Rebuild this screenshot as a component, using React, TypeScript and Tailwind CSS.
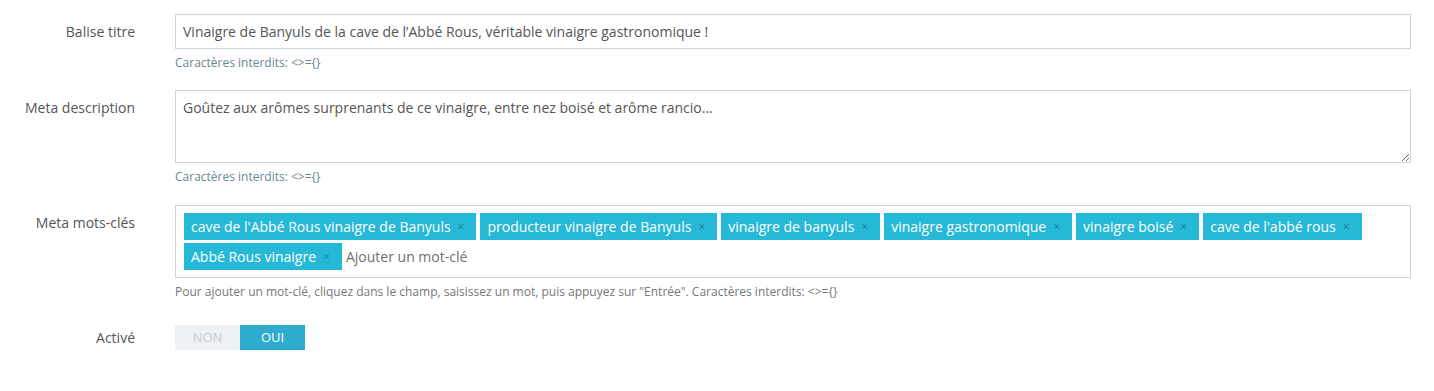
import { useState } from "react";

const tags = [
    "cave de l'Abbé Rous vinaigre de Banyuls",
    "producteur vinaigre de Banyuls",
    "vinaigre de banyuls",
    "vinaigre gastronomique",
    "vinaigre boisé",
    "cave de l'abbé rous",
    "Abbé Rous vinaigre",
];

function Label({ children }: { children: React.ReactNode }) {
    return (
        <div className="w-[135px] shrink-0 text-right text-[14px] leading-[35px] text-[#555]">
            {children}
        </div>
    );
}

export default function App() {
    const [active, setActive] = useState(true);

    return (
        <div
            className="min-h-[391px] w-full bg-white pt-[14px] pr-[23px]"
            style={{ fontFamily: '"Open Sans", "Liberation Sans", sans-serif' }}
        >
            {/* Balise titre */}
            <div className="mb-[19px] flex gap-[40px]">
                <Label>Balise titre</Label>
                <div className="flex-1">
                    <input
                        type="text"
                        defaultValue="Vinaigre de Banyuls de la cave de l’Abbé Rous, véritable vinaigre gastronomique !"
                        className="block h-[35px] w-full border border-[#c7d6db] bg-white px-[7px] text-[14px] text-[#555] outline-none"
                    />
                    <p className="mt-[6px] text-[12px] leading-[16px] text-[#6c868e]">
                        Caractères interdits: &lt;&gt;={"{}"}
                    </p>
                </div>
            </div>

            {/* Meta description */}
            <div className="mb-[20px] flex gap-[40px]">
                <Label>Meta description</Label>
                <div className="flex-1">
                    <textarea
                        defaultValue="Goûtez aux arômes surprenants de ce vinaigre, entre nez boisé et arôme rancio..."
                        className="block h-[73px] w-full border border-[#c7d6db] bg-white px-[7px] py-[7px] text-[14px] leading-[20px] text-[#555] outline-none"
                    />
                    <p className="mt-[6px] text-[12px] leading-[16px] text-[#6c868e]">
                        Caractères interdits: &lt;&gt;={"{}"}
                    </p>
                </div>
            </div>

            {/* Meta mots-clés */}
            <div className="mb-[25px] flex gap-[40px]">
                <Label>Meta mots-clés</Label>
                <div className="flex-1">
                    <div className="flex flex-wrap gap-x-[4px] gap-y-[3px] border border-[#c7d6db] bg-white px-[8px] py-[7px]">
                        {tags.map((t) => (
                            <span
                                key={t}
                                className="flex h-[27px] items-center bg-[#25b9d7] pr-[12px] pl-[7px] text-[14px] whitespace-nowrap text-white"
                            >
                                {t}
                                <span className="ml-[7px] text-[12px] text-[#1b7e92]">×</span>
                            </span>
                        ))}
                        <input
                            type="text"
                            placeholder="Ajouter un mot-clé"
                            className="h-[27px] w-[170px] bg-transparent text-[14px] text-[#555] outline-none placeholder:text-[#6f6f6f]"
                        />
                    </div>
                    <p className="mt-[6px] text-[12px] leading-[16px] text-[#777]">
                        Pour ajouter un mot-clé, cliquez dans le champ, saisissez un mot, puis appuyez sur "Entrée". Caractères
                        interdits: &lt;&gt;={"{}"}
                    </p>
                </div>
            </div>

            {/* Activé */}
            <div className="flex gap-[40px]">
                <div className="w-[135px] shrink-0 text-right text-[14px] leading-[25px] text-[#555]">Activé</div>
                <div className="flex h-[25px]">
                    <button
                        onClick={() => setActive(false)}
                        className={
                            active
                                ? "w-[65px] bg-[#eef1f4] text-[13px] text-[#c5ced4] uppercase"
                                : "w-[65px] bg-[#2eacce] text-[13px] text-white uppercase"
                        }
                    >
                        Non
                    </button>
                    <button
                        onClick={() => setActive(true)}
                        className={
                            active
                                ? "w-[65px] bg-[#2eacce] text-[13px] text-white uppercase"
                                : "w-[65px] bg-[#eef1f4] text-[13px] text-[#c5ced4] uppercase"
                        }
                    >
                        Oui
                    </button>
                </div>
            </div>
        </div>
    );
}
